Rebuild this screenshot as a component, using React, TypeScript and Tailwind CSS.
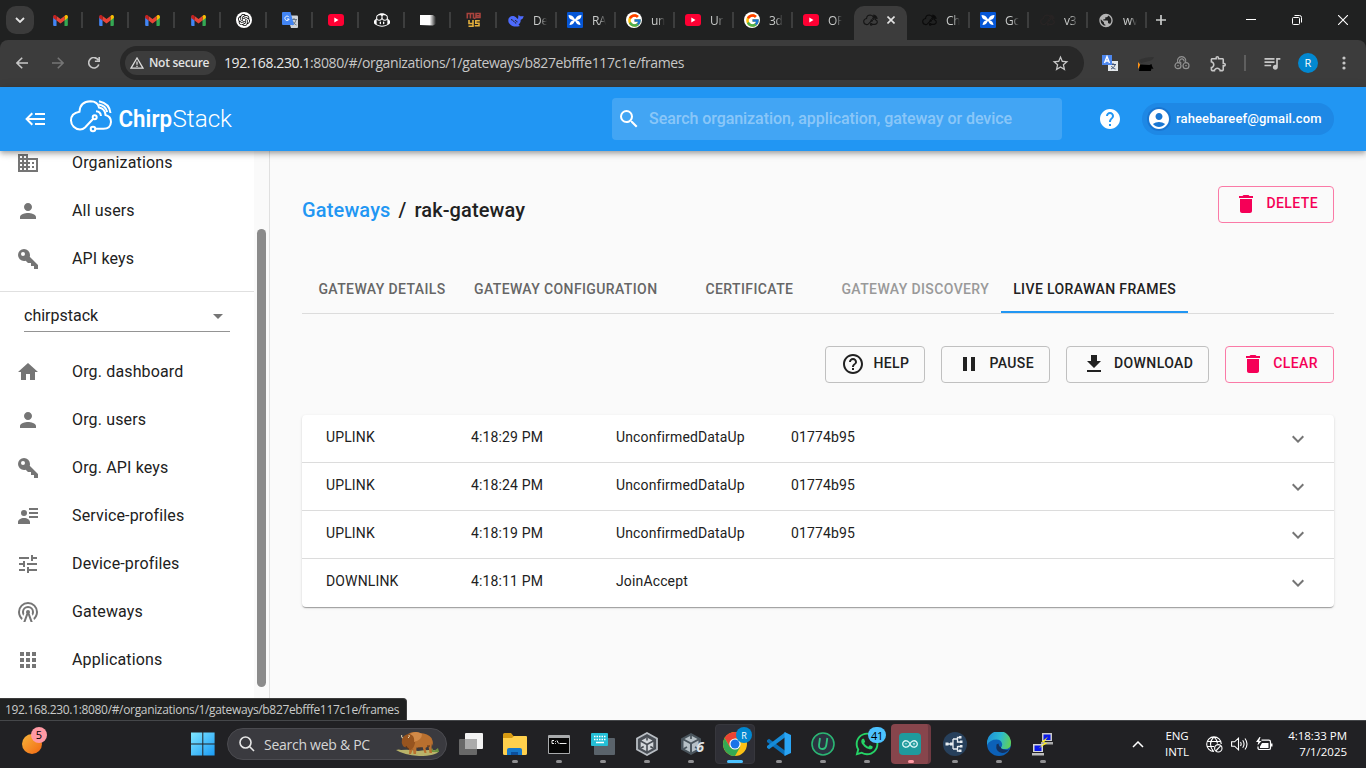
import type { ReactNode } from 'react';
import { FcGoogle } from 'react-icons/fc';
import { FaWhatsapp } from 'react-icons/fa';
import { SiOpenai, SiGithubcopilot, SiArduino } from 'react-icons/si';
import {
  MdAccountCircle, MdApps, MdDelete, MdDomain, MdExpandMore, MdFileDownload, MdHelp,
  MdHelpOutline, MdOutlineExtension, MdPause, MdPerson, MdPublic, MdQueueMusic, MdSearch, MdStarOutline, MdTune, MdArrowDropDown,
} from 'react-icons/md';

/* ---------- favicons ---------- */

const Gmail = () => (
  <svg viewBox="0 0 24 18" className="h-[11px] w-[15px]">
    <path d="M0 2v14.5A1.5 1.5 0 0 0 1.5 18H5.500V7z" fill="#4285f4" />
    <path d="M24 2v14.500A1.500 1.500 0 0 1 22.500 18H18.500V7z" fill="#34a853" />
    <path d="M18.500 2.200V9L24 5V2.500C24 .2 21.500-.8 19.700.6z" fill="#fbbc04" />
    <path d="M5.500 9V1.500L12 6.500l6.500-5V9L12 14z" fill="#ea4335" />
    <path d="M0 2.500V5l5.500 4V1.500L4.300.6C2.500-.8 0 .2 0 2.500z" fill="#c5221f" />
  </svg>
);

const OpenAi = () => (
  <span className="flex size-4 items-center justify-center rounded-full bg-white text-black">
    <SiOpenai size={12} />
  </span>
);

const Google = () => (
  <span className="flex size-4 items-center justify-center rounded-full bg-white">
    <FcGoogle size={15} />
  </span>
);

const Translate = () => (
  <svg viewBox="0 0 16 16" className="size-4">
    <path d="M5 3.500h10a1 1 0 0 1 1 1V15a1 1 0 0 1-1 1H9z" fill="#cfd3d8" />
    <path d="M9 7.500h6M12 6v1.500M14 8c-.6 2.500-2 4-4 5M10.500 9c.6 1.800 2 3 4 4" stroke="#5f6b78" strokeWidth=".9" fill="none" />
    <path d="M1 0h7.500L12 13H1a1 1 0 0 1-1-1V1a1 1 0 0 1 1-1z" fill="#4285f4" />
    <path d="M7 5.200A2.200 2.200 0 1 0 7.200 7H5" stroke="#fff" strokeWidth="1" fill="none" />
  </svg>
);

const YouTube = () => (
  <svg viewBox="0 0 16 12" className="h-3 w-4">
    <rect width="16" height="12" rx="3" fill="#ff0033" />
    <path d="M6.300 3.500v5l4.200-2.500z" fill="#fff" />
  </svg>
);

const Projector = () => (
  <svg viewBox="0 0 16 12" className="h-3 w-4">
    <defs>
      <linearGradient id="fade-white" x1="0" x2="1">
        <stop offset=".6" stopColor="#fff" />
        <stop offset="1" stopColor="#fff" stopOpacity="0" />
      </linearGradient>
    </defs>
    <path d="M0 1h13l3 2v7l-3 1.500L0 11z" fill="url(#fade-white)" />
  </svg>
);

const Moys = () => (
  <svg viewBox="0 0 16 16" className="size-4" fill="none" strokeWidth="1.600">
    <path d="M1.300 6.500V1.500h6.200v5M4.400 2v4.500M10 1.500h4v4h-4zM10 3.700h4M8.700 5.500V7" stroke="#a8433d" />
    <path d="M3 8v3.500h4M7 8v6.300H2.500M13.800 8.800h-4v2.400h3.200v2.600H8.700" stroke="#e3b03c" />
  </svg>
);

const Deepseek = () => (
  <svg viewBox="0 0 16 13" className="h-[13px] w-4">
    <path d="M.3 6.500C.3 3 3 1.500 5.500 2c2 .5 3 2 4.500 3 .4-1.300 0-2.600.7-4.200.8 1.500 2 1.900 4.900 1.100-.2 2-1.100 3.300-2.900 3.900.2 2.600-1 4-2.200 4.900l1.500 1.300C8 12.900 5 12.700 2.800 11 1.200 9.800.3 8.500.3 6.500z" fill="#4d6bfe" />
    <path d="M3 5.500c2 .3 3.500 3 5.200 4M7 6.500c1.300 0 2 .8 2 1.800" stroke="#202121" strokeWidth="1" fill="none" />
  </svg>
);

const Butterfly = () => (
  <svg viewBox="0 0 16 16" className="size-4">
    <rect width="16" height="16" rx="1.200" fill="#0556d6" />
    <path d="M1.500 3Q5.500 3 7.200 6.300L8 7.200l.8-.9Q10.500 3 14.500 3 14.300 7 11 7.700l-1.500.5Q13 9 13.500 13 10 13 8.600 9.800L8 9l-.6.800Q6 13 2.500 13 3 9 6.500 8.200L5 7.700Q1.700 7 1.500 3z" fill="#fff" />
  </svg>
);

const CloudPath = () => (
  <>
    <path d="M24 20 16 28.500Q14 30.500 11 30.500A9.200 9.200 0 0 1 2 21.500Q2 14 10.500 12.700Q11 2.500 21.500 2.200Q28.500 2.200 30 8.500Q36 9.500 36.500 16Q42 17.500 42 23Q41.500 29.800 34.500 29.800H26.500" />
    <circle cx="25.700" cy="18.200" r="2" />
    <circle cx="24" cy="30" r="2.300" />
    <path d="M27 12.300Q31.500 12.500 32 17M30 2.300Q40.500 4.500 41.500 14M29.500 5.600Q36.500 6.500 38.200 13" />
  </>
);

const CloudIcon = ({ color }: { color: string }) => (
  <svg viewBox="0 0 44 34" className="h-[12px] w-[15px]" fill="none" stroke={color} strokeWidth="3.200">
    <CloudPath />
  </svg>
);

/* ---------- browser chrome ---------- */

type Tab = { icon: ReactNode; label?: string; last?: boolean };

const smallTabs: Tab[] = [
  { icon: <Gmail /> }, { icon: <Gmail /> }, { icon: <Gmail /> }, { icon: <Gmail /> },
  { icon: <OpenAi /> }, { icon: <Translate /> }, { icon: <YouTube /> },
  { icon: <SiGithubcopilot size={16} color="#fff" /> }, { icon: <Projector /> }, { icon: <Moys /> },
];

const wideTabs: Tab[] = [
  { icon: <Deepseek />, label: 'De' },
  { icon: <Butterfly />, label: 'RA' },
  { icon: <Google />, label: 'un' },
  { icon: <YouTube />, label: 'Ur' },
  { icon: <Google />, label: '3d' },
  { icon: <YouTube />, label: 'OP', last: true },
];

const rightTabs: Tab[] = [
  { icon: <CloudIcon color="#0b0b0b" />, label: 'Ch' },
  { icon: <Butterfly />, label: 'Gc' },
  { icon: <CloudIcon color="#282424" />, label: 'v3' },
  { icon: <MdPublic size={17} color="#b4b4b4" />, label: 'wv' },
];

function WideTab({ tab }: { tab: Tab }) {
  return (
    <div className="flex h-4 w-[59px] shrink-0 items-center">
      <span className="ml-[10px] flex w-4 shrink-0 justify-center">{tab.icon}</span>
      <span className="ml-[9px] mt-px w-[17px] whitespace-nowrap text-[12px] leading-4 tracking-[-0.3px] text-[#c9cbca] [mask-image:linear-gradient(to_right,black_40%,transparent_82%)]">
        {tab.label}
      </span>
      {!tab.last && <span className="ml-auto h-4 w-[2px] shrink-0 bg-[#3d3e3e]" />}
    </div>
  );
}

function TabStrip() {
  return (
    <div className="flex h-10 items-center bg-[#202121]">
      <button className="ml-[6px] mr-[3px] flex size-7 items-center justify-center rounded-[10px] bg-[#3b3b3b]">
        <svg viewBox="0 0 10 6" className="h-[6px] w-[10px]" fill="none" stroke="#e3e3e3" strokeWidth="1.800"><path d="m1 1 4 4 4-4" /></svg>
      </button>
      {smallTabs.map((t, i) => (
        <div key={i} className="flex h-4 w-[46px] shrink-0 items-center">
          <span className="flex w-[44px] justify-center pl-[2px]">{t.icon}</span>
          <span className="h-4 w-[2px] shrink-0 bg-[#3d3e3e]" />
        </div>
      ))}
      <div className="ml-px flex">{wideTabs.map((t, i) => <WideTab key={i} tab={t} />)}</div>
      <div className="ml-[2px] mr-1 flex h-[34px] w-[53px] shrink-0 items-center self-end rounded-t-[10px] bg-[#3c3c3c] pb-[6px]">
        <span className="ml-[9px]"><CloudIcon color="#151515" /></span>
        <svg viewBox="0 0 8 8" className="ml-[9px] size-2" stroke="#e3e3e3" strokeWidth="1.600"><path d="m.5.5 7 7M7.500.5l-7 7" /></svg>
      </div>
      {rightTabs.map((t, i) => <WideTab key={i} tab={t} />)}
      <svg viewBox="0 0 10 10" className="ml-[9px] size-[10px]" stroke="#c9cbca" strokeWidth="1.700"><path d="M5 0v10M0 5h10" /></svg>
      <div className="ml-auto mr-[18px] flex items-center gap-9 text-white">
        <svg viewBox="0 0 10 10" className="size-[10px]" stroke="#fff"><path d="M0 4.500h10" /></svg>
        <svg viewBox="0 0 10 10" className="size-[10px]" fill="none" stroke="#fff"><rect x=".5" y="2.500" width="7" height="7" rx="1" /><path d="M2.500.5h5a2 2 0 0 1 2 2v5" /></svg>
        <svg viewBox="0 0 10 10" className="size-[10px]" stroke="#fff" strokeWidth="1.100"><path d="m0 0 10 10M10 0 0 10" /></svg>
      </div>
    </div>
  );
}

const Arrow = ({ color, flip }: { color: string; flip?: boolean }) => (
  <svg viewBox="0 0 12 12" className={flip ? 'size-3 rotate-180' : 'size-3'} fill="none" stroke={color} strokeWidth="1.600">
    <path d="M12 6H1M6.200.7.900 6l5.300 5.300" />
  </svg>
);

function AddressBar() {
  return (
    <div className="flex h-[47px] items-center rounded-t-lg bg-[#3c3c3c] pb-px">
      <div className="ml-4 flex w-[104px] items-center gap-6">
        <Arrow color="#c7c7c7" />
        <Arrow color="#757575" flip />
        <svg viewBox="0 0 12 12" className="size-3" fill="none" stroke="#c7c7c7" strokeWidth="1.600"><path d="M10.800 7.500A5.200 5.200 0 1 1 10.300 3M11.200 0v4.300H6.900" /></svg>
      </div>
      <div className="flex h-[34px] w-[964px] items-center rounded-full bg-[#282828]">
        <div className="ml-[5px] flex h-6 w-[91px] items-center rounded-full bg-[#3c3c3c]">
          <svg viewBox="0 0 14 12" className="ml-[5px] h-3 w-[14px]" fill="none" stroke="#dcdcdc" strokeWidth="1.300"><path d="M7 1 1 11.200h12zM7 4.500v3.300M7 8.700V10" /></svg>
          <span className="ml-[5px] whitespace-nowrap text-[12px] font-semibold tracking-[-0.28px] text-[#e3e3e3]">Not secure</span>
        </div>
        <span className="ml-2 whitespace-nowrap pb-px text-[14px] tracking-[-0.385px] text-[#c7c7c7]">
          <span className="text-[#e8e8e8]">192.168.230.1</span>:8080/#/organizations/1/gateways/b827ebfffe117c1e/frames
        </span>
        <MdStarOutline size={19} color="#c7c7c7" className="ml-auto mr-[14px]" />
      </div>
      <svg viewBox="0 0 16 16" className="ml-[18px] size-4">
        <rect x="6" y="6" width="10" height="10" fill="#e4e8ec" />
        <path d="M8 9.500h6M11 8v1.500M13 10c-.6 2-2 3-4 4M9.500 11c1 2 2 2.500 4 3" stroke="#457" strokeWidth="1" fill="none" />
        <rect width="10" height="10" fill="#4d87ee" />
        <path d="m2.500 8 2.500-6.500L7.500 8M3.400 6h3.200" stroke="#fff" strokeWidth="1.400" fill="none" />
      </svg>
      <svg viewBox="0 0 16 16" className="ml-5 size-4">
        <path d="m0 7 2.500 3L0 14z" fill="#ff9416" />
        <path d="M2 9.500 11.500 10l2-1 .5 2 1.500 3-2-.5-.7 2.500H1z" fill="#000" />
        <path d="M1 5q6-3 15-3-1 3-5 4l-8 2z" fill="#333" />
      </svg>
      <svg viewBox="0 0 16 14" className="ml-5 h-[14px] w-4" fill="none" stroke="#929292" strokeWidth="1.200">
        <path d="M3.800 6.500A4.200 4.200 0 1 1 11.500 6.500" />
        <path d="M10 5.500A2.200 2.200 0 1 0 7.500 7.200" />
        <circle cx="4" cy="9.700" r="3" /><circle cx="12" cy="9.700" r="3" />
        <path d="M3.300 9.700h1.400M11.300 9.700h1.400" />
      </svg>
      <MdOutlineExtension size={19} color="#c7c7c7" className="ml-[19px]" />
      <span className="ml-[16px] h-4 w-[2px] bg-[#5f5f5f]" />
      <MdQueueMusic size={20} color="#c7c7c7" className="ml-[16px]" />
      <span className="ml-[16px] flex size-5 items-center justify-center rounded-full bg-[#0288d1] text-[11px] text-white">R</span>
      <svg viewBox="0 0 4 14" className="ml-6 h-[14px] w-1" fill="#c7c7c7"><circle cx="2" cy="2" r="1.600" /><circle cx="2" cy="7" r="1.600" /><circle cx="2" cy="12" r="1.600" /></svg>
    </div>
  );
}

/* ---------- ChirpStack app ---------- */

const Glyph = ({ d, className }: { d: string; className?: string }) => (
  <svg viewBox="0 0 24 24" className={className ?? 'size-6'} fill="currentColor"><path d={d} /></svg>
);

const keyPath = 'M22,18V22H18V19H15V16H12L9.740,13.740C9.190,13.910 8.610,14 8,14A6,6 0 0,1 2,8A6,6 0 0,1 8,2A6,6 0 0,1 14,8C14,8.610 13.910,9.190 13.740,9.740L22,18M7,5A2,2 0 0,0 5,7A2,2 0 0,0 7,9A2,2 0 0,0 9,7A2,2 0 0,0 7,5Z';
const homePath = 'M10,20V14H14V20H19V12H22L12,3L2,12H5V20H10Z';
const accountDetailsPath = 'M13 4h9v2h-9zM13 8h9v2h-9zM13 12h9v2h-9zM8 6a3 3 0 1 1 0 6a3 3 0 0 1 0-6zM8 14c-3.300 0-6 1.800-6 4v2h12v-2c0-2.200-2.700-4-6-4z';
const towerPath = 'M12,10A2,2 0 0,1 14,12C14,12.500 13.820,12.940 13.530,13.290L16.700,22H14.570L12,14.930L9.430,22H7.300L10.470,13.290C10.180,12.940 10,12.500 10,12A2,2 0 0,1 12,10M12,8A4,4 0 0,0 8,12C8,12.500 8.100,13 8.280,13.460L7.400,15.860C6.530,14.810 6,13.470 6,12A6,6 0 0,1 12,6A6,6 0 0,1 18,12C18,13.470 17.470,14.810 16.600,15.860L15.720,13.460C15.900,13 16,12.500 16,12A4,4 0 0,0 12,8M12,4A8,8 0 0,0 4,12C4,14.360 5,16.500 6.640,17.940L5.920,19.940C3.540,18.110 2,15.230 2,12A10,10 0 0,1 12,2A10,10 0 0,1 22,12C22,15.230 20.460,18.110 18.080,19.940L17.360,17.940C19,16.500 20,14.360 20,12A8,8 0 0,0 12,4Z';
const backPath = 'M5,13L9,17L7.600,18.420L1.180,12L7.600,5.580L9,7L5,11H21V13H5M21,6V8H11V6H21M21,16V18H11V16H21Z';

function AppBar() {
  return (
    <header className="relative z-10 flex h-16 shrink-0 items-center bg-[#2196f3] text-white shadow-[0_2px_4px_-1px_rgba(0,0,0,.2),0_4px_5px_rgba(0,0,0,.14),0_1px_10px_rgba(0,0,0,.12)]">
      <Glyph d={backPath} className="ml-6 size-6" />
      <svg viewBox="0 0 166 36" className="-mt-[5px] ml-[21px] h-9 w-[166px]">
        <g fill="none" stroke="#fff" strokeWidth="2"><CloudPath /></g>
        <text x="49.500" y="27.500" fill="#fff" fontFamily="Roboto" fontWeight="600" fontSize="24" textLength="53.500" lengthAdjust="spacingAndGlyphs">Chirp</text>
        <text x="103.500" y="27.500" fill="#fff" fontFamily="Roboto" fontWeight="300" fontSize="24" textLength="59.500" lengthAdjust="spacingAndGlyphs">Stack</text>
      </svg>
      <div className="ml-auto mr-[36px] flex h-[42px] w-[450px] items-center rounded bg-white/15">
        <MdSearch size={24} className="ml-[5px]" />
        <span className="ml-2 text-[16px] font-medium tracking-[-0.06px] text-white/40">Search organization, application, gateway or device</span>
      </div>
      <MdHelp size={24} />
      <div className="ml-5 mr-8 flex h-8 w-48 items-center rounded-full bg-[#1e88e5]">
        <span className="ml-[5px] flex size-6 items-center justify-center rounded-full bg-[#1976d2]"><MdAccountCircle size={24} /></span>
        <span className="ml-[5px] text-[13px] font-medium tracking-[0.13px]">raheebareef@gmail.com</span>
      </div>
    </header>
  );
}

function NavItem({ icon, label }: { icon: ReactNode; label: string }) {
  return (
    <div className="flex h-12 shrink-0 items-center pl-4">
      <span className="w-14 text-[#757575]">{icon}</span>
      <span className="text-[16px] tracking-[0.15px] text-[#212121]">{label}</span>
    </div>
  );
}

function Sidebar() {
  return (
    <aside className="flex w-[270px] shrink-0 overflow-hidden border-r border-[#e0e0e0] bg-white">
      <nav className="-mt-3 flex w-[254px] flex-col">
        <NavItem icon={<MdDomain size={24} />} label="Organizations" />
        <NavItem icon={<MdPerson size={24} />} label="All users" />
        <NavItem icon={<Glyph d={keyPath} />} label="API keys" />
        <div className="mt-2 border-t border-[#e0e0e0]" />
        <div className="ml-6 mt-2 flex h-8 w-[206px] shrink-0 items-center justify-between border-b border-[#949494]">
          <span className="text-[16px] text-[#212121]">chirpstack</span>
          <MdArrowDropDown size={24} color="#757575" />
        </div>
        <div className="mt-4 flex flex-col">
          <NavItem icon={<Glyph d={homePath} />} label="Org. dashboard" />
          <NavItem icon={<MdPerson size={24} />} label="Org. users" />
          <NavItem icon={<Glyph d={keyPath} />} label="Org. API keys" />
          <NavItem icon={<Glyph d={accountDetailsPath} />} label="Service-profiles" />
          <NavItem icon={<MdTune size={24} />} label="Device-profiles" />
          <NavItem icon={<Glyph d={towerPath} />} label="Gateways" />
          <NavItem icon={<MdApps size={24} />} label="Applications" />
        </div>
      </nav>
      <div className="flex flex-1 justify-center bg-[#fafafa] pt-[78px]">
        <div className="h-[458px] w-[9px] rounded-full bg-[#8b8b8b]" />
      </div>
    </aside>
  );
}

function ActionButton({ icon, label, danger, wide }: { icon: ReactNode; label: string; danger?: boolean; wide?: boolean }) {
  return (
    <button
      className={
        'flex h-[37px] items-center justify-between rounded border px-[15px] pb-[2px] text-[14px] font-medium tracking-[0.4px] ' +
        (wide ? 'w-[116px] ' : '') +
        (danger ? 'border-[#fa7aa7] text-[#f50057]' : 'border-[#c0c0c0] text-[#212121]')
      }
    >
      {icon}
      <span className="pl-2">{label}</span>
    </button>
  );
}

const pageTabs = [
  { label: 'GATEWAY DETAILS', tone: 'text-[#666]' },
  { label: 'GATEWAY CONFIGURATION', tone: 'text-[#666]' },
  { label: 'CERTIFICATE', tone: 'text-[#666]' },
  { label: 'GATEWAY DISCOVERY', tone: 'text-[#999]' },
  { label: 'LIVE LORAWAN FRAMES', tone: 'text-[#212121] border-b-2 border-[#2196f3] pt-[2px]' },
];

const frames = [
  ['UPLINK', '4:18:29 PM', 'UnconfirmedDataUp', '01774b95'],
  ['UPLINK', '4:18:24 PM', 'UnconfirmedDataUp', '01774b95'],
  ['UPLINK', '4:18:19 PM', 'UnconfirmedDataUp', '01774b95'],
  ['DOWNLINK', '4:18:11 PM', 'JoinAccept', ''],
];

function Content() {
  return (
    <main className="flex flex-1 flex-col bg-[#fafafa] px-8">
      <div className="mt-[35px] flex items-start justify-between">
        <h1 className="flex pt-[9px] text-[20px] font-medium leading-[30px] tracking-[0.1px] text-[#212121]">
          <span className="tracking-[0.15px] text-[#2196f3]">Gateways</span>
          <span className="px-2">/</span>
          <span>rak-gateway</span>
        </h1>
        <ActionButton danger wide icon={<MdDelete size={24} />} label="DELETE" />
      </div>
      <div className="mt-10 flex h-[49px] border-b border-[#dcdcdc]">
        {pageTabs.map((t) => (
          <div key={t.label} className={'flex h-12 min-w-40 items-center justify-center px-3 text-[14px] font-medium tracking-[0.385px] ' + t.tone}>
            {t.label}
          </div>
        ))}
      </div>
      <div className="mt-8 flex justify-end gap-4">
        <ActionButton icon={<MdHelpOutline size={24} />} label="HELP" />
        <ActionButton icon={<MdPause size={24} />} label="PAUSE" />
        <ActionButton icon={<MdFileDownload size={24} />} label="DOWNLOAD" />
        <ActionButton danger icon={<MdDelete size={24} />} label="CLEAR" />
      </div>
      <div className="mt-8 rounded bg-white shadow-[0_2px_1px_-1px_rgba(0,0,0,.2),0_1px_1px_rgba(0,0,0,.14),0_1px_3px_rgba(0,0,0,.12)]">
        {frames.map((f, i) => (
          <div
            key={i}
            className={'grid h-12 grid-cols-[145px_145px_175px_1fr_24px] items-center pl-6 pr-6 text-[14px] tracking-[0.14px] text-[#212121] ' + (i < 3 ? 'border-b border-[#dcdcdc]' : '')}
          >
            {f.map((c, j) => <span key={j} className="pb-[3px]">{c}</span>)}
            <MdExpandMore size={24} color="#757575" />
          </div>
        ))}
      </div>
    </main>
  );
}

/* ---------- taskbar ---------- */

const Start = () => (
  <svg viewBox="0 0 24 24" className="size-6">
    <defs>
      <linearGradient id="start" x1="0" y1="0" x2="1" y2="1" gradientUnits="objectBoundingBox"><stop stopColor="#7fe6ff" /><stop offset="1" stopColor="#1a9bf5" /></linearGradient>
    </defs>
    <path d="M0 .5h11.300v11H0zM12.300.5h11.300v11H12.300zM0 12.500h11.300v11H0zM12.300 12.500h11.300v11H12.300z" fill="url(#start)" />
  </svg>
);

const Bison = () => (
  <svg viewBox="0 0 44 26" className="h-[26px] w-11">
    <path d="M0 19q3-1 5 0 8-1 17 1 12-2 21 0-3 5-20 5Q8 24 0 19z" fill="#b9b36a" />
    <path d="m34 21 2-4 2 3 4-3 1 4z" fill="#6f9440" />
    <path d="M12 3q5-3.500 12-1 8 .5 11.500 5 2 4 1.500 8l-1-3-.5 4 .5 6h-2.500l-1-7-3 2 1 5h-2l-2-6q-3 1-6 .5l-.5 6.500h-2.500l-.5-5-2 5H13l.5-7z" fill="#b9702f" />
    <path d="M6 8Q8 3 14 3q7 2 5 9-1 5-4 7-3 0-4-3-2 1-4-1-2-3-1-7z" fill="#97541f" />
    <path d="M14 3q6-4 12 0 0 6-8 8 1-6-4-8z" fill="#d28a48" />
    <path d="M7 7q-2 0-1.300-3M12 7q2-1 1-3" stroke="#ead8b3" fill="none" />
    <path d="M10 15q1 3 3 3M22 17h3M31 15h3" stroke="#5f3214" fill="none" />
  </svg>
);

const TaskView = () => (
  <svg viewBox="0 0 24 22" className="h-[22px] w-6"><rect x="6" width="18" height="16" rx="1" fill="#f2f2f2" /><rect y="6" width="18" height="16" rx="1" fill="#6f6f6f" fillOpacity=".92" /><path d="M6 6h12v10H6z" fill="#aaa" /></svg>
);
const Folder = () => (
  <svg viewBox="0 0 24 22" className="h-[22px] w-6"><path d="M0 1.500Q0 0 1.500 0H8l2.500 3H22v6H0z" fill="#d79a12" /><path d="M0 5h9l2-2h12q1 0 1 1v16.500q0 1.500-1.500 1.500h-21Q0 22 0 20.500z" fill="#ffd04c" /><path d="M4 22v-5q0-2 2-2h11q2 0 2 2v5z" fill="#1678ca" /><path d="M8 19h7v3H8z" fill="#0c4f9c" /></svg>
);
const Terminal = () => (
  <svg viewBox="0 0 22 19" className="h-[19px] w-[22px]"><rect width="22" height="19" rx="1" fill="#a8aaac" /><rect x="1" y="3" width="20" height="15" fill="#050505" /><path d="M6 5.500H4v3h2M7.500 6v.8M7.500 8v.8M9 5.500l1.500 3M11.500 8.500h7" stroke="#eee" fill="none" /></svg>
);
const Keyboard = () => (
  <svg viewBox="0 0 24 22" className="h-[22px] w-6"><rect x="3" y="5" width="21" height="17" rx="1" fill="#5a636b" /><rect width="17" height="13" rx="1" fill="#24bfd6" /><path d="M3 3.500h12M3 6.500h12" stroke="#fff" strokeWidth="1.500" strokeDasharray="1.500 1" /><path d="M5 9.500h8" stroke="#fff" strokeWidth="1.500" /></svg>
);
const UnityCube = () => (
  <svg viewBox="0 0 22 24" className="h-6 w-[22px]">
    <path d="M11 1 21 6.500v11L11 23 1 17.500v-11z" fill="#4a4f56" stroke="#b9bec4" strokeWidth="1.800" />
    <path d="M11 5.500 16.500 8.500 11 11.500 5.500 8.500zM4.700 10 10.200 13v6l-5.500-3zM17.300 10 11.800 13v6l5.500-3z" fill="#d3d7db" />
    <path d="M11 5.500v3M5 16l2.700-1.500M17 16l-2.700-1.500" stroke="#4a4f56" strokeWidth="1.600" />
  </svg>
);
const UnitySix = () => (
  <svg viewBox="0 0 22 24" className="h-6 w-[22px]">
    <path d="M11 1 21 6.500v11L11 23 1 17.500v-11z" fill="#4a555d" />
    <path d="M11 3.500 17.500 7 11 10.500 4.500 7zM3.500 8.500 10 12v8l-6.500-3.500zM18.500 8.500 12 12v8l6.500-3.500z" fill="#b6c0c6" />
    <path d="M11 3v4M3.500 17l3.500-2M18.500 17 15 15" stroke="#4a555d" strokeWidth="1.700" />
  </svg>
);
const Chrome = () => (
  <svg viewBox="0 0 24 24" className="size-6">
    <circle cx="12" cy="12" r="12" fill="#fbc116" />
    <path d="M1.610 6A12 12 0 0 1 22.390 6L12 6.500 6.800 15z" fill="#ea4335" />
    <path d="M1.610 6A12 12 0 0 0 12 24l5.200-9L6.800 15z" fill="#34a853" />
    <circle cx="12" cy="12" r="5.600" fill="#fff" /><circle cx="12" cy="12" r="4.500" fill="#1a73e8" />
  </svg>
);
const VsCode = () => (
  <svg viewBox="0 0 24 24" className="size-6">
    <path d="M0 8.300 2 6.700 18.500 19v5L0 10z" fill="#0a6fb8" />
    <path d="M0 15.700 2 17.300 18.500 5V0L0 14z" fill="#168bd8" />
    <path d="M17.500 0 24 3v18l-6.500 3z" fill="#2aa5f5" />
  </svg>
);
const Uninstaller = () => (
  <svg viewBox="0 0 24 24" className="size-6"><circle cx="12" cy="12" r="11" fill="#2b3340" stroke="#2bb673" strokeWidth="1.600" /><path d="m9 6-1 7q-.3 4 3.300 4 3.400 0 4-4l1-7" stroke="#2fc17c" strokeWidth="1.800" fill="none" /></svg>
);
const Network = () => (
  <svg viewBox="0 0 24 24" className="size-6"><circle cx="12" cy="12" r="12" fill="#27405c" /><path d="M3 12h7M10 7v10M10 7h5M10 17h5M14.500 9.500v-4h3M14.500 7v3h3M14.500 14.500h3M14.500 14v5h3" stroke="#e8edf2" strokeWidth="1.300" fill="none" /><path d="M2.500 10.500h3v3h-3zM7 10.500h3v3H7zM16 4h2.500v2.500H16zM17 8.500h2.500V11H17zM17 13h2.500v2.500H17zM16 17.500h2.500V20H16z" fill="#e8edf2" /></svg>
);
const Edge = () => (
  <svg viewBox="0 0 24 24" className="size-6">
    <defs><linearGradient id="edge" x1="0" y1=".3" x2="1" y2=".5"><stop stopColor="#1d8fd8" /><stop offset=".55" stopColor="#2bb9cf" /><stop offset="1" stopColor="#5fd05a" /></linearGradient></defs>
    <circle cx="12" cy="12" r="12" fill="#0c61b8" />
    <path d="M0 11A12 12 0 0 1 24 11q0 6-6 6-4 0-4-1.500 1.500-1.500 1-4Q14 7.500 9.500 7.500 3 7.500 0 13z" fill="url(#edge)" />
    <path d="M9.500 12.500Q8 20 15 21q4 .5 7.500-4Q20 18.500 17 17.500q-4-.7-3-2.500-2 0-2.500-3.500z" fill="#15294d" opacity=".85" />
  </svg>
);
const Putty = () => (
  <svg viewBox="0 0 22 23" className="h-[23px] w-[22px]"><path d="M10 0h10v8H10z" fill="#c9c9c9" /><path d="M11.500 1.500h7V7h-7z" fill="#0a18e8" /><path d="M9 9h12v2.500H9z" fill="#aaa" /><path d="M1 11h10v8H1z" fill="#d5d5d5" /><path d="M2.500 12.500h7V18h-7z" fill="#0a18e8" /><path d="M0 20h12v2.500H0z" fill="#bdbdbd" /><path d="M16 3.500 9.500 9l3.500.5-6.500 6 9-5.500-3.500-.5z" fill="#ffef20" /></svg>
);

type TaskItem = { icon: ReactNode; dot?: boolean; kind?: 'active' | 'alert'; badge?: string; badgeClass?: string };

const tasks: TaskItem[] = [
  { icon: <TaskView /> },
  { icon: <Folder />, dot: true },
  { icon: <Terminal />, dot: true },
  { icon: <Keyboard />, dot: true },
  { icon: <UnityCube />, dot: true },
  { icon: <UnitySix />, dot: true, badge: '6', badgeClass: 'top-[20px] right-[9px] text-[14px] font-bold italic text-[#e2e4e6]' },
  { icon: <Chrome />, kind: 'active', badge: 'R', badgeClass: 'top-[7px] right-[5px] size-4 rounded-full bg-[#0288d1] text-[9px] text-white' },
  { icon: <VsCode />, dot: true },
  { icon: <Uninstaller />, dot: true },
  { icon: <FaWhatsapp size={26} color="#25d366" />, dot: true, badge: '41', badgeClass: 'top-[7px] right-[3px] h-4 w-[18px] rounded-full bg-[#4cc2ff] text-[11px] tracking-tight text-black' },
  { icon: <span className="flex size-[22px] items-center justify-center rounded bg-[#1f9a9d]"><SiArduino size={16} color="#d6f4f4" /></span>, kind: 'alert' },
  { icon: <Network />, dot: true },
  { icon: <Edge />, dot: true },
  { icon: <Putty />, dot: true },
];

function TaskButton({ item }: { item: TaskItem }) {
  const frame =
    item.kind === 'active' ? 'rounded bg-[#2f2f36] border border-[#37373d]' :
    item.kind === 'alert' ? 'rounded bg-[#87454c] border-r-[3px] border-[#6f3a42]' : '';
  return (
    <div className="relative flex h-[48px] w-11 shrink-0 justify-center pt-1">
      <div className={'flex h-10 w-10 items-center justify-center ' + frame}>
        <span className="flex h-6 items-center">{item.icon}</span>
      </div>
      {item.badge && <span className={'absolute flex items-center justify-center leading-none ' + (item.badgeClass ?? '')}>{item.badge}</span>}
      {item.dot && <span className="absolute bottom-[5px] left-[19px] h-[3px] w-[6px] rounded-full bg-[#8f8f92]" />}
      {item.kind === 'active' && <span className="absolute bottom-[5px] left-[14px] h-[3px] w-4 rounded-full bg-[#4cc2ff]" />}
      {item.kind === 'alert' && <span className="absolute bottom-[5px] left-[19px] h-[3px] w-[6px] rounded-full bg-[#ff99a4]" />}
    </div>
  );
}

function Taskbar() {
  return (
    <footer className="flex h-12 shrink-0 items-center border-t border-[#45474a] bg-[#212124] pb-px text-white">
      <div className="relative ml-[22px] mr-[149px] size-5 rounded-full bg-gradient-to-br from-[#f6b53a] to-[#f0640f]">
        <span className="absolute -right-[5px] -top-[7px] flex size-4 items-center justify-center rounded-full bg-[#ff99a4] text-[11px] text-black">5</span>
      </div>
      <Start />
      <div className="ml-3 flex h-8 w-[220px] items-center rounded-full border border-[#4b4b50] bg-[#3a3a3f]">
        <svg viewBox="0 0 16 16" className="ml-[11px] size-4" fill="none" stroke="#e6e6e6" strokeWidth="1.600"><circle cx="6.500" cy="6.500" r="5.500" /><path d="m10.500 10.500 4.500 4.500" /></svg>
        <span className="ml-[9px] whitespace-nowrap text-[14px] tracking-[-0.27px] text-[#d6d6d6]">Search web &amp; PC</span>
        <span className="ml-auto mr-[6px]"><Bison /></span>
      </div>
      <div className="ml-[2px] flex">{tasks.map((t, i) => <TaskButton key={i} item={t} />)}</div>
      <svg viewBox="0 0 12 7" className="ml-auto h-[7px] w-3" fill="none" stroke="#fff" strokeWidth="1.500"><path d="m1 6 5-5 5 5" /></svg>
      <div className="ml-5 w-[26px] text-center text-[11.500px] leading-4 tracking-[-0.1px]">ENG<br />INTL</div>
      <div className="ml-4 flex items-center gap-2">
        <svg viewBox="0 0 17 17" className="size-[17px]" fill="none" stroke="#fff" strokeWidth="1.100"><path d="M8 15.500A7.300 7.300 0 1 1 15.300 8M1 5.500h14M1 10.500h7M8 .8Q4.500 4 4.500 8t3 7.300M8 .8q3.300 3 3.500 6.700" /><circle cx="12.300" cy="12.300" r="3.700" /><path d="m9.700 15 5.200-5.300" /></svg>
        <svg viewBox="0 0 17 14" className="h-[14px] w-[17px]" fill="none" stroke="#fff" strokeWidth="1.100"><path d="M.6 4.800h3L7.500 1.200v11.600L3.600 9.200h-3zM9.500 5q1.300 2 0 4M11.700 3.200q2.700 3.800 0 7.600M14 1.500q4 5.500 0 11" /></svg>
        <svg viewBox="0 0 17 14" className="h-[14px] w-[17px]"><path d="M5.500 3.200h7.300q1.700 0 1.700 1.700v6q0 1.600-1.700 1.600H3.700Q2 12.500 2 11V9.500" stroke="#fff" strokeWidth="1.200" fill="none" /><path d="M6 6h6.500v5H4V9.500z M15 6.500h1.500v3H15z" fill="#fff" /><path d="M3.500 0 0 5h2.300L1.500 8.500 5.500 4H3.200L4.500 0z" fill="#fff" /></svg>
      </div>
      <div className="ml-[14px] mr-[19px] w-[60px] whitespace-nowrap text-right text-[11.500px] leading-4 tracking-[-0.03px]"><div className="flex justify-end">4:18:33 PM</div>7/1/2025</div>
    </footer>
  );
}

export default function App() {
  return (
    <div className="relative flex h-[768px] w-[1366px] flex-col overflow-hidden bg-[#202121] font-['Open_Sans','Noto_Sans',sans-serif]">
      <TabStrip />
      <AddressBar />
      <div className="flex min-h-0 flex-1 flex-col font-['Roboto',sans-serif]">
        <AppBar />
        <div className="flex min-h-0 flex-1">
          <Sidebar />
          <Content />
        </div>
      </div>
      <div className="absolute bottom-12 left-0 flex h-[22px] w-[407px] items-center rounded-tr border-r border-t border-[#3c3c3c] bg-[#202121] pl-[5px] text-[12px] tracking-[-0.335px] text-[#c9cbca]">
        <span className="whitespace-nowrap">192.168.230.1:8080/#/organizations/1/gateways/b827ebfffe117c1e/frames</span>
      </div>
      <Taskbar />
    </div>
  );
}
